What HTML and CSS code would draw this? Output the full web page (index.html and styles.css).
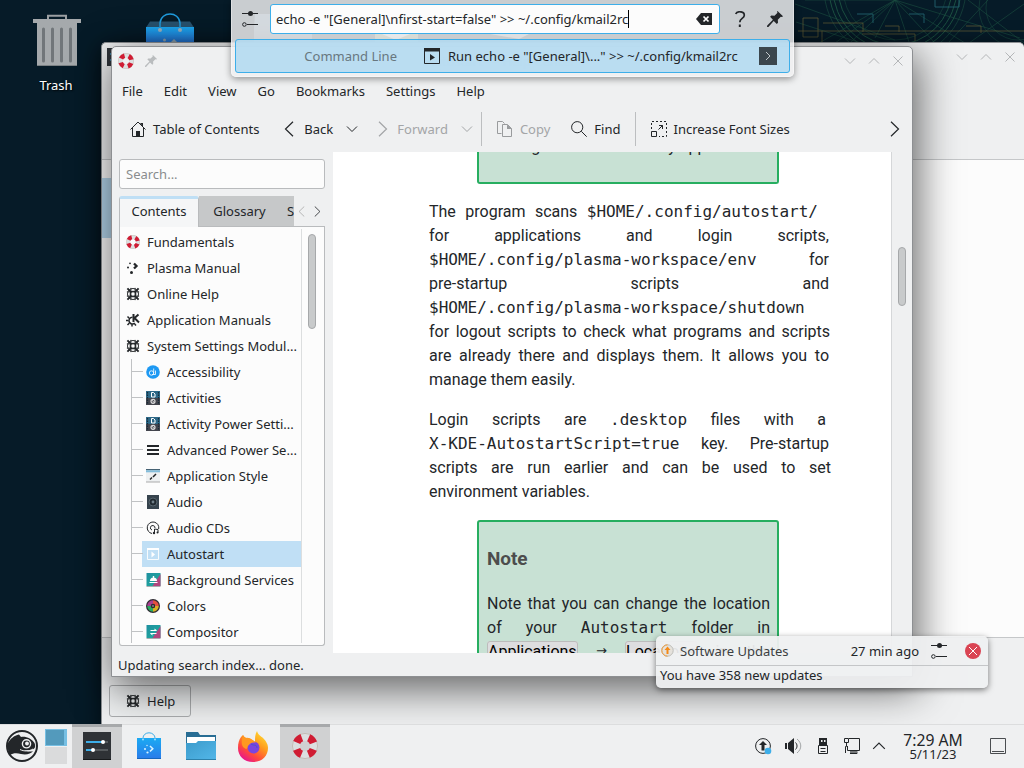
FILE: index.html
```html
<!DOCTYPE html>
<html lang="en">
<head>
<meta charset="utf-8">
<title>Autostart — Help Center</title>
<link rel="stylesheet" href="styles.css">
</head>
<body>
<svg class="defs" width="0" height="0" aria-hidden="true">
  <defs>
    <linearGradient id="bag" x1="0" y1="0" x2="0" y2="1"><stop offset="0" stop-color="#1baaf3"/><stop offset="1" stop-color="#2a7be9"/></linearGradient>
    <linearGradient id="fold" x1="0" y1="0" x2="1" y2="1"><stop offset="0" stop-color="#3c9bcb"/><stop offset="1" stop-color="#52b6e8"/></linearGradient>
    <linearGradient id="fox" x1="1" y1="0" x2=".3" y2="1"><stop offset="0" stop-color="#fff13c"/><stop offset=".45" stop-color="#ff9a1c"/><stop offset=".75" stop-color="#ff4a3c"/><stop offset="1" stop-color="#e8158d"/></linearGradient>
    <linearGradient id="teal" x1="0" y1="0" x2="1" y2="1"><stop offset="0" stop-color="#1f8fa0"/><stop offset="1" stop-color="#1fae9c"/></linearGradient>
    <symbol id="ring" viewBox="0 0 24 24"><circle cx="12" cy="12" r="8.3" fill="none" stroke="#dcdfe0" stroke-width="7"/><circle cx="12" cy="12" r="11.6" fill="none" stroke="#b9aaa0" stroke-width=".6"/><circle cx="12" cy="12" r="8.3" fill="none" stroke="#d01c33" stroke-width="7" stroke-dasharray="6.6 6.438" stroke-dashoffset="-3.2"/></symbol>
    <symbol id="buoy" viewBox="0 0 16 16"><g fill="none" stroke="#232629"><circle cx="8" cy="8" r="6.3" stroke-width="1.1"/><circle cx="8" cy="8" r="3.2" stroke-width="1.3"/><path d="M5.6 1v14M10.4 1v14M1 5.6h14M1 10.4h14" stroke-width="1.1"/><path d="M1.6 1.6l4 4M14.4 1.6l-4 4M1.6 14.4l4-4M14.4 14.4l-4-4" stroke-width="2.2"/></g></symbol>
    <symbol id="down" viewBox="0 0 12 12"><path d="M1 3.5l5 5 5-5" fill="none" stroke="currentColor"/></symbol>
    <symbol id="up" viewBox="0 0 12 12"><path d="M1 8.5l5-5 5 5" fill="none" stroke="currentColor"/></symbol>
    <symbol id="close" viewBox="0 0 12 12"><path d="M1.5 1.5l9 9M10.5 1.5l-9 9" fill="none" stroke="currentColor"/></symbol>
    <symbol id="left" viewBox="0 0 10 16"><path d="M9 .7L1.5 8 9 15.3" fill="none" stroke="currentColor" stroke-width="1.2"/></symbol>
    <symbol id="right" viewBox="0 0 10 16"><path d="M1 .7L8.500 8 1 15.300" fill="none" stroke="currentColor" stroke-width="1.2"/></symbol>
    <symbol id="pin" viewBox="0 0 16 16"><path d="M10.500 0L16 5.200l-1 .8-1.200-.3-3 3 .2 3-1.200 1.200-3.100-3L1.400 16 0 16l.2-1.600 5.700-5.700-2.800-3L4.300 4.500l3.200.3 3-3-.5-1z" fill="currentColor"/></symbol>
    <symbol id="sliders" viewBox="0 0 16 16"><path d="M0 2.500h16M5 13.500h11" stroke="#232629"/><circle cx="8.500" cy="2.500" r="2.500" fill="#232629"/><circle cx="2.400" cy="13.500" r="1.800" fill="none" stroke="#232629"/></symbol>
    <symbol id="activity" viewBox="0 0 14 14"><path d="M0 0h14v7H0z" fill="#2d6887"/><path d="M0 7h14v7H0z" fill="#43454d"/><path d="M5.500 1.500h2l1.500 1.500v3H5.500z" fill="none" stroke="#fff"/><circle cx="7" cy="10.300" r="2" fill="none" stroke="#ddd" stroke-width="1.200"/><path d="M5.500 8.800l3 3" stroke="#ddd"/><path d="M1.500 1v12M12.500 1v12" stroke="#172b38" stroke-width="1.200" stroke-dasharray="1.500 1"/></symbol>
    <symbol id="shop" viewBox="0 0 24 28"><path d="M0 6h24v21H0z" fill="url(#bag)"/><path d="M0 26h24v1H0z" fill="#1766bd"/><path d="M6 8V6a6 5.200 0 0112 0v2" fill="none" stroke="#3daee9"/><circle cx="6" cy="7.500" r="1" fill="#9edcfa"/><circle cx="18" cy="7.500" r="1" fill="#9edcfa"/><path d="M13 14l2.800 2.700-2.800 2.700" fill="none" stroke="#d8f3ff" stroke-width="1.500"/><g fill="#d8f3ff"><circle cx="10" cy="13.500" r=".7"/><circle cx="8" cy="17" r="1"/><circle cx="10.500" cy="20.500" r="1.100"/></g></symbol>
  </defs>
</svg>

<div class="desktop">
  <svg class="wallpaper" viewBox="0 0 1024 768">
    <g fill="none" stroke="#23624a" opacity=".75">
      <circle cx="895" cy="-12" r="62"/><circle cx="895" cy="-12" r="57"/><circle cx="895" cy="-12" r="66"/><circle cx="895" cy="-12" r="71" stroke-width=".6"/><circle cx="895" cy="-12" r="52" stroke-width=".5"/>
      <path d="M895 0l-76 43M895 0l-60 43M895 0l-45 43M895 0l-20 38M895 0l14 42M895 0l40 43M895 0l70 43M895 0h-90M895 0l125 38M968 0l56 43M1024 4l-55 39M988 0l-40 43M796 22l65 21M795 4l100 36" stroke-width=".6"/>
      <circle cx="1018" cy="8" r="32" stroke-width=".5"/><circle cx="1018" cy="8" r="39" stroke-width=".5"/>
      <path d="M935 0v7h24V0M857 14h16v9M909 14h15v9" stroke="#27717d"/>
    </g>
    <g fill="none" stroke="#6d6334" opacity=".65"><path d="M803 18h15v19h-15zM798 31h226M822 31v11M885 26h14v6M966 26h15v7M862 34h53v7M823 23h40v9"/></g>
    <g class="ghosts"><path d="M255 14h18v14h39v15h-58V28z" fill="#456980"/><path d="M375 32h43v11h-43z" fill="#78905c"/><path d="M382 34h28l-14 6z" fill="#eee"/><path d="M490 34h39l-10 5z" fill="#aaa"/></g>
    <g><path d="M150 21.500h40l4 6h-48z" fill="#28536f"/><path d="M146 27h48v17h-48z" fill="url(#bag)"/><path d="M160 29v-6c1-12 19-12 20 0v6" fill="none" stroke="#209cde" stroke-width="1.500"/><g fill="#9fb6c4"><circle cx="160" cy="30" r="2"/><circle cx="180" cy="30" r="2"/><circle cx="164.500" cy="40" r="1.500"/><path d="M171 42l3-3 3 3z"/></g></g>
  </svg>
  <div class="trash">
    <svg width="48" height="54" viewBox="0 0 48 54"><path d="M15 6V1.800h18V6" fill="none" stroke="#9b9fa2" stroke-width="2"/><path d="M0 5h48v4H0z" fill="#a5a9ac"/><path d="M4 9h40v43H4z" fill="#a5a9ac"/><path d="M4 51h40v1H4z" fill="#7c8285"/><path d="M10.500 15v32M19.500 15v32M28.500 15v32M37.500 15v32" stroke="#71767a" stroke-width="3" stroke-linecap="round"/></svg>
    <span>Trash</span>
  </div>

  <section class="window settings">
    <header class="settings-head">
      <svg class="app-mark" width="12" height="18" viewBox="0 0 12 18"><path d="M0 0h12v18H0z" fill="#31363b"/><path d="M3 6h9M3 12h9" stroke="#3daee9"/></svg>
      <div class="controls"><svg><use href="#down"/></svg><svg><use href="#up"/></svg><svg><use href="#close"/></svg></div>
    </header>
    <div class="settings-body"><div class="settings-side"><i></i></div><div class="settings-main"></div></div>
    <footer class="settings-foot"><button class="help"><svg width="14" height="14"><use href="#buoy"/></svg>Help</button></footer>
  </section>

  <section class="window center">
    <header class="titlebar">
      <svg width="16" height="16"><use href="#ring"/></svg>
      <svg class="tpin" width="12" height="12"><use href="#pin"/></svg>
      <span class="title">Autostart — Help Center</span>
      <div class="controls"><svg><use href="#down"/></svg><svg><use href="#up"/></svg><svg><use href="#close"/></svg></div>
    </header>
    <nav class="menubar"><span>File</span><span>Edit</span><span>View</span><span>Go</span><span>Bookmarks</span><span>Settings</span><span>Help</span></nav>
    <div class="toolbar">
      <span class="tool t-home"><svg width="16" height="16" viewBox="0 0 16 16"><path d="M.5 8.500L8 1l7.500 7.500M2.500 7v8.500h11V7" fill="none" stroke="#232629"/><path d="M6 10h4v5.500H6zM10 2h3v4z" fill="#232629"/></svg>Table of Contents</span>
      <span class="tool t-back"><svg width="10" height="16"><use href="#left"/></svg>Back<svg class="drop" width="12" height="12"><use href="#down"/></svg></span>
      <span class="tool t-fwd off"><svg width="10" height="16"><use href="#right"/></svg>Forward<svg class="drop" width="12" height="12"><use href="#down"/></svg></span>
      <i class="sep"></i>
      <span class="tool t-copy off"><svg width="16" height="16" viewBox="0 0 16 16"><path d="M4.500 12.500h-4V.5h5l2 2M5.500 3.500h5l4 4v8h-9z" fill="none" stroke="#999b9d"/><path d="M10 3.500v4.500h5z" fill="#999b9d"/></svg>Copy</span>
      <span class="tool t-find"><svg width="16" height="16" viewBox="0 0 16 16"><circle cx="6.200" cy="6.200" r="5.600" fill="none" stroke="#232629"/><path d="M10.300 10.300l5.400 5.400" stroke="#232629"/></svg>Find</span>
      <i class="sep"></i>
      <span class="tool t-font"><svg width="16" height="16" viewBox="0 0 16 16"><g fill="none" stroke="#232629"><path d="M.5 8V.5h15v15H8" stroke-dasharray="2 2"/><path d="M.500 10.500h5v5h-5zM7.500 8.500l4-4M8 4.500h3.500V8"/></g></svg>Increase Font Sizes</span>
      <svg class="more" width="10" height="16"><use href="#right"/></svg>
    </div>
    <div class="content">
      <aside class="sidebar">
        <div class="search">Search...</div>
        <div class="tabs"><span class="tab active">Contents</span><span class="tab">Glossary</span><span class="tab cut">S</span><div class="tab-nav"><svg class="dim" width="7" height="11"><use href="#left"/></svg><svg width="7" height="11"><use href="#right"/></svg></div></div>
        <div class="tree">
          <ul class="rows">
            <li><svg><use href="#ring"/></svg>Fundamentals</li>
            <li><svg viewBox="0 0 14 14"><path d="M8 2.500L10.500 5 8 7.500" fill="none" stroke="#232629" stroke-width="2.300"/><g fill="#232629"><circle cx="4" cy="2.300" r=".9"/><circle cx="2" cy="6.500" r="1"/><circle cx="5.500" cy="11.500" r="1.500"/></g></svg>Plasma Manual</li>
            <li><svg><use href="#buoy"/></svg>Online Help</li>
            <li><svg viewBox="0 0 14 14"><path d="M6.500 4.200A3.400 3.400 0 108.800 10" fill="none" stroke="#232629" stroke-width="1.500"/><path d="M1.500 3.500l1.700 1.700M0 7.500h2.500M1.500 12l1.700-1.700M6 13.500v-2.300M10 12.500l-1.400-1.500" stroke="#232629" stroke-width="1.500"/><path d="M7.500 1v8M12.500 1.500L8.500 5l4.500 4.500" fill="none" stroke="#232629" stroke-width="2"/></svg>Application Manuals</li>
            <li><svg><use href="#buoy"/></svg>System Settings Modul...</li>
            <li class="sub"><svg viewBox="0 0 14 14"><circle cx="7" cy="7" r="6.800" fill="#1d99f3"/><circle cx="5.500" cy="8" r="2.200" fill="none" stroke="#fff" stroke-width=".8"/><path d="M7.700 3.500v5M9.500 5.500v4H6" fill="none" stroke="#fff" stroke-width=".8"/></svg>Accessibility</li>
            <li class="sub"><svg><use href="#activity"/></svg>Activities</li>
            <li class="sub"><svg><use href="#activity"/></svg>Activity Power Setti...</li>
            <li class="sub"><svg viewBox="0 0 14 14"><path d="M1 2h12v2H1zM1 6h12v2H1zM1 10h12v2H1z" fill="#232629"/></svg>Advanced Power Se...</li>
            <li class="sub"><svg viewBox="0 0 14 14"><path d="M0 1h14v12H0z" fill="#eef0f1"/><path d="M0 0h14v1.300H0z" fill="#466274"/><path d="M0 1.300h14v2H0z" fill="#83bddb"/><path d="M0 13h14" stroke="#aaa"/><path d="M4 10.500l2-2M7 8l3-3" stroke="#232629" stroke-width="1.500"/></svg>Application Style</li>
            <li class="sub"><svg viewBox="0 0 14 14"><path d="M1 0h12v14H1z" fill="#36434d"/><circle cx="7" cy="7" r="4" fill="#202a31" stroke="#56646d"/><circle cx="7" cy="7" r="1.400" fill="#71818a"/></svg>Audio</li>
            <li class="sub"><svg viewBox="0 0 14 14"><path d="M6 12.500A5.800 5.800 0 1112.700 8" fill="none" stroke="#232629"/><path d="M6 9a2.300 2.300 0 113-2M8.500 11.500v-3.500l3.500.5v3" fill="none" stroke="#232629"/><circle cx="8" cy="12" r="1.200" fill="#232629"/><circle cx="11.500" cy="11.500" r="1" fill="#232629"/></svg>Audio CDs</li>
            <li class="sub sel"><svg viewBox="0 0 14 14"><path d="M1.500 1.500h11v11h-11z" fill="none" stroke="#f7fbfd"/><path d="M1 1h12v2H1zM5.500 4.500L9 7.500l-3.500 3z" fill="#fff"/></svg>Autostart</li>
            <li class="sub"><svg class="wide-ico" viewBox="0 0 14 14"><path d="M0 0h14v13H0z" fill="url(#teal)"/><path d="M14 1v12H6z" fill="#b0467e"/><path d="M3.500 8a3.500 3.500 0 017 0zM3 9h8v1H3zM6.300 3h1.400v2H6.300z" fill="#fff"/><path d="M0 13.500h14" stroke="#a9adb0"/></svg>Background Services</li>
            <li class="sub"><svg viewBox="0 0 14 14"><circle cx="7" cy="7" r="7" fill="#2f2c33"/><g fill="none" stroke-width="3.600"><path d="M3 7A4 4 0 017 3" stroke="#a83e91"/><path d="M7 3A4 4 0 0111 7" stroke="#e4503f"/><path d="M11 7A4 4 0 017 11" stroke="#d8b125"/><path d="M7 11A4 4 0 013 7" stroke="#2aab62"/></g><circle cx="7" cy="7" r="1.900" fill="#2f2c33"/><circle cx="7" cy="7" r=".9" fill="#8a8a8d"/></svg>Colors</li>
            <li class="sub"><svg class="wide-ico" viewBox="0 0 14 14"><path d="M0 0h14v13H0z" fill="url(#teal)"/><path d="M14 1v12H6z" fill="#b0467e"/><path d="M4 5.500h6M4 8.500h6" stroke="#fff"/><path d="M8 3.500l2.500 2H8zM6 10.500l-2.500-2H6z" fill="#fff"/><path d="M0 13.500h14" stroke="#a9adb0"/></svg>Compositor</li>
          </ul>
          <div class="track"><i></i></div>
        </div>
      </aside>
      <article class="doc">
        <div class="note note-top"><div class="frag">configure it automatically appear</div></div>
        <div class="para p1">
          <div class="ln first">The program scans <code>$HOME/.config/autostart/</code></div>
          <div class="ln">for applications and login scripts,</div>
          <div class="ln"><code>$HOME/.config/plasma-workspace/env</code> for</div>
          <div class="ln">pre-startup scripts and</div>
          <div class="ln end"><code>$HOME/.config/plasma-workspace/shutdown</code></div>
          <div class="ln plus">for logout scripts to check what programs and scripts</div>
          <div class="ln">are already there and displays them. It allows you to</div>
          <div class="ln end">manage them easily.</div>
        </div>
        <div class="para">
          <div class="ln short">Login scripts are <code>.desktop</code> files with a</div>
          <div class="ln"><code>X-KDE-AutostartScript=true</code> key. Pre-startup</div>
          <div class="ln wide">scripts are run earlier and can be used to set</div>
          <div class="ln end">environment variables.</div>
        </div>
        <div class="note note-main">
          <h3>Note</h3>
          <div class="ln plus-note">Note that you can change the location</div>
          <div class="ln plus-note">of your <code>Autostart</code> folder in</div>
          <div class="ln"><kbd>Applications</kbd> <span class="arrow">→</span> <kbd>Locations</kbd> in the</div>
        </div>
      </article>
      <div class="doc-track"><i></i></div>
    </div>
    <footer class="status">Updating search index... done.</footer>
  </section>

  <section class="runner">
    <div class="query">
      <svg width="16" height="16"><use href="#sliders"/></svg>
      <div class="field"><span>echo -e "[General]\nfirst-start=false" &gt;&gt; ~/.config/kmail2rc</span><b></b><svg width="16" height="12" viewBox="0 0 16 12"><path d="M5 0h11v12H5L0 6z" fill="#232629"/><path d="M7.500 3.500l5 5M12.500 3.500l-5 5" stroke="#fff" stroke-width="1.700"/></svg></div>
      <svg class="q" width="12" height="16" viewBox="0 0 12 16"><path d="M1.700 3C3 0 10.300-.3 10.300 4.200c0 3.300-4.500 3.200-4.500 7" fill="none" stroke="#232629" stroke-width="1.700"/><path d="M4.800 13.500h2V16h-2z" fill="#232629"/></svg>
      <svg width="16" height="16"><use href="#pin"/></svg>
    </div>
    <div class="result"><span class="kind">Command Line</span><svg width="16" height="16" viewBox="0 0 16 16"><path d="M.5.5h15v15H.5z" fill="none" stroke="#232629"/><path d="M0 0h16v3.500H0zM6 6l5 3.500-5 3z" fill="#232629"/></svg><span class="run">Run echo -e "[General]\..." &gt;&gt; ~/.config/kmail2rc</span><svg class="term" width="18" height="18" viewBox="0 0 18 18"><path d="M0 0h18v18H0z" fill="#3b464d"/><path d="M7 5l4 4-4 4" fill="none" stroke="#c1c7ca"/></svg></div>
  </section>

  <section class="toast">
    <div class="toast-head"><svg width="13" height="13" viewBox="0 0 13 13"><circle cx="6.500" cy="6.500" r="5.700" fill="#e5e2dc" stroke="#bdbdb9"/><path d="M6.500.800a5.700 5.700 0 000 11.400" fill="none" stroke="#f19b36"/><path d="M6.500 2.500L3.500 6h2v4h2V6h2z" fill="#f58a17"/></svg><span>Software Updates</span><time>27 min ago</time><svg class="cfg" width="16" height="16"><use href="#sliders"/></svg><svg width="16" height="16" viewBox="0 0 16 16"><circle cx="8" cy="8" r="8" fill="#da4453"/><path d="M4 4l8 8M12 4l-8 8" stroke="#fff"/></svg></div>
    <div class="toast-body">You have 358 new updates</div>
  </section>

  <footer class="panel">
    <svg class="suse" width="32" height="32" viewBox="0 0 32 32"><circle cx="16" cy="16" r="15" fill="none" stroke="#232629" stroke-width="2"/><path d="M2 13C4 9 8 5.500 13 4.500l2 2.500c5-1 11 2 13.500 6 1 2 1 5-1 6-3 1.500-7 1.500-10 1 3 1.500 7 2 9.500 1-2 3-7 4-12 3-4-1-8-1-11 1C2 21 1 17 2 13z" fill="#232629"/><circle cx="20.500" cy="13.800" r="4.100" fill="#232629" stroke="#eff0f1" stroke-width="1.400"/><circle cx="21" cy="13.500" r="1.900" fill="#eff0f1"/><path d="M14 19.500c4 2 9 2 13-.5" fill="none" stroke="#eff0f1"/></svg>
    <div class="pager"><i class="cur"></i><i></i></div>
    <div class="task on"><svg width="28" height="28" viewBox="0 0 28 28"><path d="M0 0h28v28H0z" fill="#2f3236"/><path d="M0 27h28v1H0z" fill="#17191b"/><path d="M3 10h22M3 18h22" stroke="#55595c" stroke-width="2"/><path d="M3 10h17M3 18h7" stroke="#3daee9" stroke-width="2"/><circle cx="20" cy="10" r="2" fill="#fff"/><circle cx="10" cy="18" r="2" fill="#fff"/></svg></div>
    <div class="task"><svg width="24" height="28"><use href="#shop"/></svg></div>
    <div class="task folder"><svg width="30" height="28" viewBox="0 0 30 28"><path d="M0 0h12l2 3h16v15H0z" fill="#286d94"/><path d="M1 5h28v7H1z" fill="#fff"/><path d="M0 11h10l2-2h18v18H0z" fill="url(#fold)"/><path d="M0 27h30v1H0z" fill="#2d80aa"/></svg></div>
    <div class="task"><svg width="30" height="31" viewBox="0 0 30 31"><path d="M19 0c1 4 4 5 6 7 4 4 5 7 5 10 0 8-6 14-15 14S0 25 0 17c0-5 1-8 3-11l2-2c1 2 2 2 3 3 3 0 7 2 9 4 0-4 0-8 2-11z" fill="url(#fox)"/><circle cx="15.500" cy="16.500" r="6" fill="#7a45df"/><path d="M5 4c1 2 2 2 3 3 4-1 8 3 10 5-3-1-6 0-7 2-2 1-1 4-3 4-5-2-5-7-3-14z" fill="#ff9820"/><path d="M13 13c3 2 6 0 6 4" fill="none" stroke="#4d53c8"/></svg></div>
    <div class="task on"><svg width="26" height="26"><use href="#ring"/></svg></div>
    <div class="tray">
      <svg width="17" height="17" viewBox="0 0 17 17"><circle cx="8" cy="8" r="7.400" fill="none" stroke="#232629"/><path d="M8 3L4 7h2.500v5.500h3V7H12z" fill="#232629"/><circle cx="13" cy="13" r="3.300" fill="#3daee9"/></svg>
      <svg width="17" height="16" viewBox="0 0 17 16"><path d="M0 5h2v6H0zM3 5l6-5v16l-6-5z" fill="#232629"/><path d="M10.500 4.500c2 2 2 5 0 7" fill="none" stroke="#232629"/><path d="M12 1c5 4 5 10 0 14" fill="none" stroke="#a2a5a7"/></svg>
      <svg width="10" height="16" viewBox="0 0 10 16"><path d="M1 0h8v7H1z" fill="#232629"/><path d="M3 2h1.500v2H3zM6 2h1.500v2H6z" fill="#eff0f1"/><path d="M.5 7.500h9v8h-9zM2.500 10.500h5" fill="none" stroke="#232629"/><path d="M2.500 13.500h5" stroke="#232629"/></svg>
      <svg width="16" height="16" viewBox="0 0 16 16"><g fill="none" stroke="#232629"><path d="M5 .5h10.500v12H3.500V8"/><path d="M.5.500h4v4h-4zM2.500 5v3.500h-1V15M6 15.500h7" /></g><path d="M6 12h7l1 3.500H6z" fill="#232629" opacity=".6"/></svg>
      <svg width="14" height="14"><use href="#up"/></svg>
    </div>
    <div class="clock"><b>7:29 AM</b><span>5/11/23</span></div>
    <svg class="peek" width="16" height="16" viewBox="0 0 16 16"><path d="M.5.5h15v15H.5zM2 13.500h12" fill="none" stroke="#4a4d50"/></svg>
  </footer>
</div>
</body>
</html>
```

FILE: styles.css
```css
* { box-sizing: border-box; }
body { margin: 0; font-family: "Noto Sans", sans-serif; font-size: 13px; color: #232629; }
svg { display: block; flex: none; }
.defs { position: absolute; }
.desktop { position: relative; width: 1024px; height: 768px; overflow: hidden; background: #061b28; }
.wallpaper { position: absolute; left: 0; top: 0; width: 1024px; height: 768px; }
.trash { position: absolute; left: 16px; top: 14px; width: 80px; display: flex; flex-direction: column; align-items: center; gap: 8px; color: #fff; text-shadow: 1px 1px 2px #000; line-height: 18px; }
.trash svg { margin-left: 2px; }
.window { position: absolute; display: flex; flex-direction: column; background: #eff0f1; }
.window > * { flex-shrink: 0; }

.controls { display: flex; gap: 12px; color: #b4b6b8; margin-left: auto; }
.controls svg { width: 12px; height: 12px; }

.settings { left: 101px; top: 42px; width: 923px; height: 690px; border: 1px solid #8e9194; border-right: 0; border-radius: 5px 5px 0 0; overflow: hidden; box-shadow: 0 4px 22px rgba(0,0,0,.6); }
.settings-head { height: 116px; display: flex; align-items: flex-start; padding: 5px 8px 0 5px; }
.settings-head .controls { margin-top: 3px; }
.settings-body { height: 479px; display: flex; border-top: 1px solid #c5c7c9; border-bottom: 1px solid #c5c7c9; background: #fcfcfc; }
.settings-side { width: 172px; border-right: 1px solid #b7cbd6; padding-top: 18px; }
.settings-side i { display: block; height: 60px; background: #b5d7ed; }
.settings-main { flex: 1; }
.settings-foot { padding: 47px 7px; }
.help { display: flex; align-items: center; gap: 7px; width: 82px; height: 32px; padding: 0 0 0 16px; border: 1px solid #aaacae; border-radius: 3px; background: rgba(239,240,241,.35); font: inherit; color: inherit; }

.center { left: 111px; top: 46px; width: 802px; height: 631px; border: 1px solid #8d8f92; border-radius: 5px 5px 0 0; box-shadow: 3px 10px 42px 2px rgba(0,0,0,.6); }
.titlebar { height: 29px; display: flex; align-items: center; padding: 0 8px 1px 6px; }
.tpin { color: #b9bcbe; margin-left: 11px; }
.title { flex: 1; text-align: center; color: #c0c2c4; padding-left: 0; }
.titlebar .controls { margin: 0; }
.menubar { height: 29px; display: flex; align-items: center; gap: 21px; padding: 0 10px; }
.toolbar { height: 46px; display: flex; align-items: center; padding: 2px 12px 0 18px; }
.tool { display: flex; align-items: center; gap: 7px; white-space: nowrap; }
.off { color: #a3a5a7; }
.t-back { margin-left: 25px; gap: 10px; }
.t-back .drop, .t-fwd .drop { margin-left: 3px; }
.t-fwd { margin-left: 20px; gap: 9px; }
.t-fwd .drop { margin-left: 4px; }
.sep { width: 1px; height: 34px; background: #bcbec0; margin: 0 15px 0 8px; }
.t-find { margin-left: 21px; }
.t-find + .sep { margin: 0 15px 0 14px; }
.more { margin-left: auto; }

.content { display: flex; height: 501px; margin-top: 1px; }
.sidebar { width: 206px; margin: 6px 8px 7px 7px; display: flex; flex-direction: column; }
.search { height: 30px; margin-top: 1px; border: 1px solid #b9bbbd; border-radius: 3px; background: #fcfcfc; color: #8a8c8e; padding: 5px 6px; line-height: 18px; }
.tabs { display: flex; height: 31px; margin-top: 7px; position: relative; z-index: 1; }
.tab { width: 96px; text-align: center; line-height: 30px; background: #c6c8c9; border-bottom: 1px solid #b9bbbd; }
.tab:nth-child(2) { width: 81px; }
.tab.active { width: 80px; background: #f5f6f7; border: 1px solid #b9bbbd; border-bottom: 0; border-top: 3px solid #bfdff5; line-height: 24px; border-radius: 3px 3px 0 0; }
.tab.cut { width: 14px; padding-left: 7px; overflow: hidden; text-align: left; }
.tab-nav { flex: 1; display: flex; align-items: center; gap: 9px; padding-left: 4px; border-bottom: 1px solid #b9bbbd; }
.dim { color: #aaa; }
.tree { flex: 1; min-height: 0; display: flex; margin-top: -1px; border: 1px solid #b9bbbd; border-top-color: transparent; border-radius: 0 0 3px 3px; background: #fcfcfc; padding: 2px 2px 2px; }
.rows { list-style: none; margin: 0; padding: 0; width: 180px; border-right: 1px solid #dcdedf; overflow: hidden; white-space: nowrap; flex: none; }
.rows li { height: 26px; display: flex; align-items: center; gap: 7px; padding-left: 4px; }
.rows li svg { width: 14px; height: 14px; }
.rows li .wide-ico { width: 15px; margin-right: -1px; }
.rows .sub { position: relative; padding-left: 24px; }
.rows .sub::before { content: ""; position: absolute; left: 9px; top: 0; width: 11px; height: 26px; border-left: 1px solid #c0c2c4; background: linear-gradient(#c0c2c4, #c0c2c4) 0 12px / 11px 1px no-repeat; }
.sel { background: linear-gradient(#c0dff5, #c0dff5) 20px 0 / 200px 26px no-repeat; }
.track { flex: 1; padding: 5px 0 0 6px; }
.track i { display: block; width: 8px; height: 95px; border: 1px solid #a6a8aa; border-radius: 4px; background: #c8cacb; }

.doc { width: 559px; background: #fff; border-right: 1px solid #d5d7d9; overflow: hidden; font: 16px/24px Roboto, sans-serif; color: #232629; }
.note { width: 302px; margin-left: 144px; border: 2px solid #27ae60; background: #c8e1d4; border-radius: 3px; padding: 0 8px; }
.note-top { height: 32px; border-top: 0; border-radius: 0 0 3px 3px; overflow: hidden; }
.frag { margin-top: -17px; padding-left: 9px; white-space: nowrap; }
.para { width: 400px; margin: 16px 0 0 96px; }
.ln { height: 24px; text-align: justify; text-align-last: justify; white-space: nowrap; }
.ln.end { text-align-last: left; }
.ln.first { width: 389px; }
.ln.short { width: 397px; }
.ln.plus { width: 401px; }
.ln.wide { width: 402px; }
.ln.plus-note { width: 283px; }
code { font: 16px/20px "DejaVu Sans Mono", monospace; }
.note-main { height: 180px; margin-top: 16px; }
h3 { margin: 25px 0 21px; font-size: 19px; line-height: 24px; color: #4d4d4d; font-weight: 700; letter-spacing: -.1px; }
kbd { font: 16px/20px Roboto, sans-serif; color: #000; background: #dddddf; border: 1px solid #bcbcbc; border-radius: 3px; }
.arrow { font: 13px/18px "DejaVu Sans", sans-serif; vertical-align: 2px; }
.doc-track { padding: 95px 0 0 6px; }
.doc-track i { display: block; width: 8px; height: 59px; border: 1px solid #a6a8aa; border-radius: 4px; background: #c8cacb; }
.status { padding: 2px 6px 0; line-height: 20px; }

.runner { position: absolute; left: 231px; top: 0; width: 563px; height: 77px; background: rgba(239,240,241,.84); border: 1px solid rgba(255,255,255,.4); border-top: 0; border-radius: 0 0 5px 5px; box-shadow: 0 2px 7px rgba(0,0,0,.4); padding: 4px 3px; }
.query { display: flex; align-items: center; height: 30px; padding-left: 7px; }
.field { width: 450px; height: 30px; margin-left: 12px; border: 1px solid #3daee9; border-radius: 3px; background: #fcfcfc; display: flex; align-items: center; padding: 0 7px 0 5px; white-space: nowrap; }
.field b { width: 1px; height: 18px; background: #000; }
.field svg { margin-left: auto; }
.q { margin: 0 21px 0 14px; }
.result { height: 34px; margin-top: 5px; display: flex; align-items: center; border: 1px solid #3daee9; border-radius: 3px; background: rgba(178,217,240,.88); white-space: nowrap; }
.kind { width: 161px; margin-right: 27px; text-align: right; color: #68777f; }
.run { margin-left: 8px; }
.term { margin: 0 12px 0 auto; }

.toast { position: absolute; left: 656px; top: 636px; width: 332px; height: 52px; background: rgba(239,240,241,.94); border-radius: 5px; box-shadow: 0 2px 6px rgba(0,0,0,.5); line-height: 20px; }
.toast-head { display: flex; align-items: center; height: 30px; padding: 0 7px 0 5px; border-bottom: 1px solid #c4c6c8; }
.toast-head span { margin-left: 6px; color: #3c3f42; }
.toast-head time { margin-left: auto; }
.cfg { margin: 0 18px 0 12px; }
.toast-body { padding-left: 4px; line-height: 18px; }

.panel { position: absolute; left: 0; top: 724px; width: 1024px; height: 44px; background: #eff0f1; border-top: 1px solid #dcddde; display: flex; align-items: center; padding-bottom: 1px; }
.suse { margin-left: 6px; }
.pager { display: flex; flex-direction: column; gap: 1px; margin: 0 5px 0 7px; }
.pager i { width: 22px; height: 17px; background: #dadbdc; }
.pager .cur { background: #539abc; border: 1px solid #76bfe3; border-right-width: 3px; }
.task { width: 50px; height: 44px; margin-right: 2px; display: flex; align-items: center; justify-content: center; }
.task.on { background: #d0d1d2; border-top: 3px solid #a7a9ab; padding-bottom: 3px; }
.tray { margin-left: auto; display: flex; align-items: center; gap: 13px; }
.tray svg:nth-child(3) { margin-left: 3px; margin-right: 3px; }
.tray svg:nth-child(5) { margin-left: -1px; }
.clock { width: 82px; margin: 0 16px 0 6px; text-align: center; display: flex; flex-direction: column; }
.clock b { font-size: 15.700px; line-height: 16px; font-weight: 400; }
.clock span { font-size: 13px; line-height: 13px; }
.peek { margin-right: 18px; }
```
